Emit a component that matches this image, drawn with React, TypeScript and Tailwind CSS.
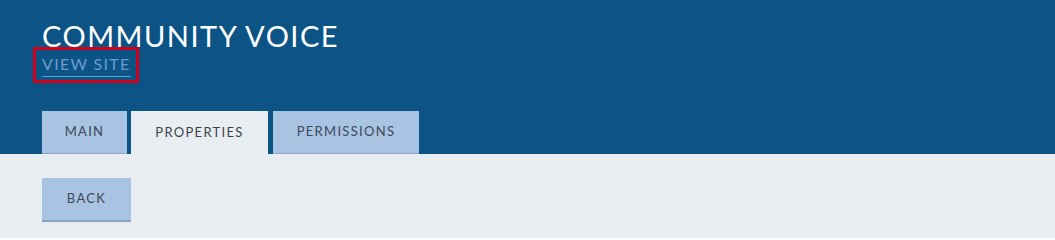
import React from 'react';

const font = { fontFamily: 'Lato, "Open Sans", sans-serif' };

const Tab = ({ label, active }: { label: string; active?: boolean }) => (
  <div
    className={`h-[43px] flex items-center justify-center text-[13px] tracking-[1.3px] ${
      active
        ? 'bg-[#e8edf2] text-[#3d3f4a]'
        : 'bg-[#a8c4e2] text-[#3f4658] border-b border-[#8aa5c3]'
    }`}
  >
    {label}
  </div>
);

export default function App() {
  return (
    <div className="w-[1055px] h-[238px] bg-[#e8edf2]" style={font}>
      {/* Header */}
      <div className="bg-[#0c5486] h-[154px] px-[42px] pt-[20px] flex flex-col">
        <h1 className="text-white text-[29px] leading-[32px] tracking-[1.5px]">COMMUNITY VOICE</h1>
        <div className="mt-[-5px] ml-[-9px] w-[106px] h-[36px] border-[3px] border-[#d0021b] pl-[6px] pt-[2px]">
          <a className="inline-block text-[#6d9ccb] text-[16px] leading-[18px] tracking-[1.3px] border-b border-[#6d9ccb] pb-[3px]">
            VIEW SITE
          </a>
        </div>
        <div className="mt-auto flex gap-[4px]">
          <div className="w-[85px]"><Tab label="MAIN" /></div>
          <div className="w-[137px]"><Tab label="PROPERTIES" active /></div>
          <div className="w-[146px] ml-[1px]"><Tab label="PERMISSIONS" /></div>
        </div>
      </div>
      {/* Body */}
      <div className="px-[42px] pt-[24px]">
        <button className="w-[89px] h-[44px] bg-[#a8c4e2] border-b-2 border-[#8aa5c3] text-[#3f4658] text-[13px] tracking-[1.3px]">
          BACK
        </button>
      </div>
    </div>
  );
}
